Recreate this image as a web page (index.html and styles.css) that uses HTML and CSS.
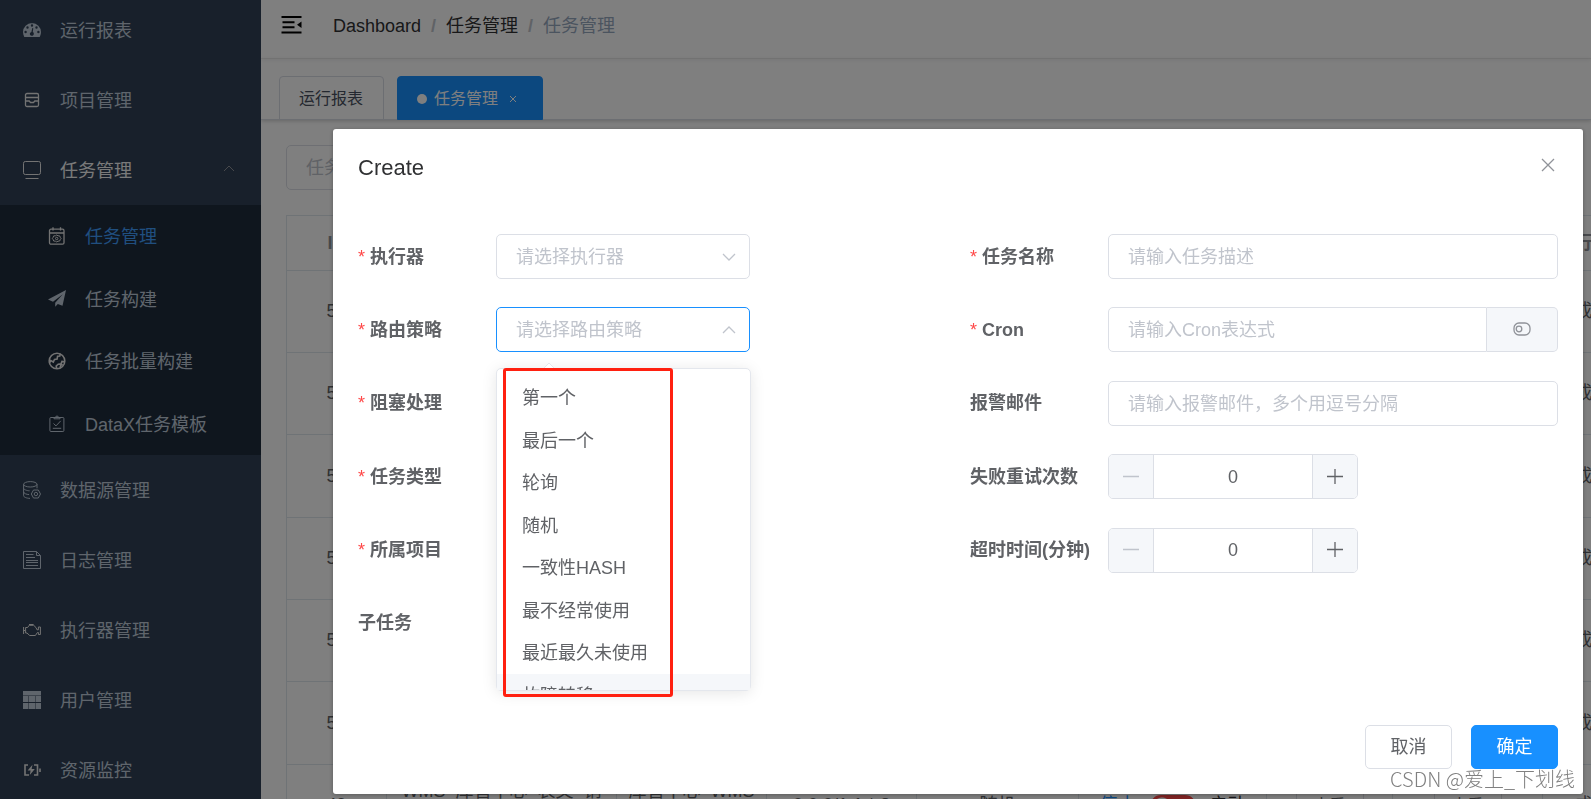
FILE: index.html
```html
<!DOCTYPE html>
<html lang="zh-CN">
<head>
<meta charset="utf-8">
<title>任务管理</title>
<link rel="stylesheet" href="styles.css">
</head>
<body>
<div class="app">
  <nav class="sidebar">
    <ul class="menu">
      <li><a class="menu-item" href="#">
        <svg class="icon" viewBox="0 0 18 18"><path fill="currentColor" fill-rule="evenodd" d="M9 2a9 9 0 0 0-9 9c0 1.800.5 3.400 1.300 5h15.400c.800-1.600 1.300-3.200 1.300-5a9 9 0 0 0-9-9zM9 3.300a1.200 1.200 0 1 1 0 2.400 1.200 1.200 0 0 1 0-2.400zM4.500 5.300a1.200 1.200 0 1 1 0 2.400 1.200 1.200 0 0 1 0-2.400zM13.500 5.300a1.200 1.200 0 1 1 0 2.400 1.200 1.200 0 0 1 0-2.400zM2.600 9.800a1.200 1.200 0 1 1 0 2.400 1.200 1.200 0 0 1 0-2.400zM15.400 9.800a1.200 1.200 0 1 1 0 2.400 1.200 1.200 0 0 1 0-2.400zM9.300 7l1 .2-.5 3.900a2 2 0 1 1-1.400-.2z"/></svg>
        <span>运行报表</span></a></li>
      <li><a class="menu-item" href="#">
        <svg class="icon bright" viewBox="0 0 18 18"><g class="line mid"><rect x="2.500" y="2.500" width="13" height="13" rx="1.500"/><path d="M2.500 6.500h13M2.500 10h3.700l1.300 1.500h3L11.800 10h3.700"/></g></svg>
        <span>项目管理</span></a></li>
      <li><a class="menu-item open" href="#">
        <svg class="icon bright" viewBox="0 0 18 18"><g class="line"><rect x=".5" y=".5" width="17" height="13" rx="1.800"/><path d="M2.500 17.500h13"/></g></svg>
        <span>任务管理</span>
        <svg class="caret" viewBox="0 0 12 8"><path class="line" d="M1 6l5-5 5 5"/></svg></a>
        <ul class="submenu">
          <li><a class="menu-item active" href="#">
            <svg class="icon bright" viewBox="0 0 18 18"><g class="line mid"><rect x="1.500" y="2.200" width="14.500" height="15" rx="1.500"/><path d="M1.500 6h14.500M5 .3v3.200M12.500 .3v3.200"/></g><g class="line"><path d="M8.700 8l1.300.8 1.700.1.600 1.500.8 1-.8 1.100-.6 1.500-1.700.2-1.300.7-1.300-.7-1.700-.2-.6-1.500-.8-1.100.8-1 .6-1.500 1.700-.1z"/><circle cx="8.700" cy="11.500" r="1.200"/></g></svg>
            <span>任务管理</span></a></li>
          <li><a class="menu-item" href="#">
            <svg class="icon" viewBox="0 0 18 18"><path fill="currentColor" d="M18 0L0 9.500l5 2.200L14.800 4.200l-7.600 8.500v4.100l2.600-2.800 4.700 1.800z"/></svg>
            <span>任务构建</span></a></li>
          <li><a class="menu-item" href="#">
            <svg class="icon bright" viewBox="0 0 18 18"><g class="line thick"><circle cx="9" cy="9" r="7.800"/><path d="M1.300 11l1.500-2.500 2.500 1.500 1.200-2.600 2.600-.4.500-2.800 2.200-.2.500-2.300M8.700 16.500l-.5-2.500 2-1.800 2.800-.3 1-2.400 2.800.4M12 15.800l.8-2.500 2-.8"/></g></svg>
            <span>任务批量构建</span></a></li>
          <li><a class="menu-item" href="#">
            <svg class="icon" viewBox="0 0 18 18"><g class="line"><rect x="1.900" y="2.500" width="14" height="14" rx="1"/><path d="M6 3.800V2.500h1.500l.6-1.300h1.800l.6 1.300H12v1.300zM5.500 8.500l2.500 2.400 4.700-5M4.800 13.300h8.400"/></g></svg>
            <span>DataX任务模板</span></a></li>
        </ul></li>
      <li><a class="menu-item" href="#">
        <svg class="icon" viewBox="0 0 18 18"><g class="line"><ellipse cx="7.300" cy="3.300" rx="6.700" ry="2.700"/><path d="M.6 3.300v11.400c0 1.400 3 2.600 6.400 2.700M14 3.300v4M.6 7.200c0 1.300 3 2.500 6 2.600M.6 11c0 1.300 3 2.500 5.500 2.600"/><path d="M10.500 9h4.800l2.200 4-2.200 4h-4.800l-2.200-4z"/><circle cx="12.900" cy="13" r="1.700"/></g></svg>
        <span>数据源管理</span></a></li>
      <li><a class="menu-item" href="#">
        <svg class="icon" viewBox="0 0 18 18"><g class="line"><path d="M.5.5h13l4 4v13H.5zM13.500.5v4h4M3 3.500h7.500M3 6.500h9M3 9.500h12M3 11.500h12M3 14.500h12"/></g></svg>
        <span>日志管理</span></a></li>
      <li><a class="menu-item" href="#">
        <svg class="icon bright" viewBox="0 0 18 18"><g class="line"><path d="M.6 6v7M.6 9.500h2V6.500h2l1.600-2.200h4.500l2.300 2.300 1 2.200h1.400V6h2v7.500h-2v-2h-1l-2 3H6.700L4 12H2.600V9.500M6 3.500h4.500"/></g></svg>
        <span>执行器管理</span></a></li>
      <li><a class="menu-item" href="#">
        <svg class="icon" viewBox="0 0 18 18"><path fill="currentColor" d="M0 0h18v4.500H0zM0 5h5.500v6H0zM6 5h6v6H6zM12.500 5H18v6h-5.500zM0 12h5.500v6H0zM6 12h6v6H6zM12.500 12H18v6h-5.500z"/></svg>
        <span>用户管理</span></a></li>
      <li><a class="menu-item" href="#">
        <svg class="icon bright" viewBox="0 0 18 18"><path class="line thick" d="M5 4H2v10h4M11 4h3.500v10H11M17 7.500v3.500"/><path fill="currentColor" d="M9.500 3.700L4.600 9.500h3L6.800 14l5-6H8.600z"/></svg>
        <span>资源监控</span></a></li>
    </ul>
  </nav>

  <main class="main">
    <header class="navbar">
      <button class="hamburger" type="button" aria-label="折叠菜单"><svg viewBox="0 0 20 18"><path fill="#000" d="M0 0h20v2H0zM1 5.300h12v2H1zM1 10.300h12v2H1zM0 15.500h20v2H0zM20 5.500v6.500l-4.500-3.200z"/></svg></button>
      <div class="breadcrumb"><a href="#">Dashboard</a><b>/</b><a href="#">任务管理</a><b>/</b><span>任务管理</span></div>
    </header>
    <div class="tags">
      <a class="tag" href="#">运行报表</a>
      <a class="tag current" href="#"><i class="dot"></i>任务管理<svg class="tag-close" viewBox="0 0 8 8"><path class="line" d="M1 1l6 6M7 1l-6 6"/></svg></a>
    </div>
    <section class="content">
      <input class="control filter" type="text" placeholder="任务名称" aria-label="任务名称">
      <table class="grid">
        <colgroup><col class="c100"><col class="c230"><col class="c150"><col class="c150"><col class="c162"><col class="c188"><col class="c126"><col class="c150"><col class="c100"></colgroup>
        <thead><tr><th>ID</th><th></th><th></th><th></th><th></th><th></th><th></th><th></th><th>执行状态</th></tr></thead>
        <tbody>
          <tr><td>55</td><td></td><td></td><td></td><td></td><td></td><td></td><td></td><td>成功</td></tr>
          <tr><td>54</td><td></td><td></td><td></td><td></td><td></td><td></td><td></td><td>成功</td></tr>
          <tr><td>53</td><td></td><td></td><td></td><td></td><td></td><td></td><td></td><td>成功</td></tr>
          <tr><td>52</td><td></td><td></td><td></td><td></td><td></td><td></td><td></td><td>成功</td></tr>
          <tr><td>51</td><td></td><td></td><td></td><td></td><td></td><td></td><td></td><td>成功</td></tr>
          <tr><td>50</td><td></td><td></td><td></td><td></td><td></td><td></td><td></td><td>成功</td></tr>
          <tr><td>49</td><td>WMS_库管中心_表文_销售</td><td>库管中心_WMS项目</td><td>0 0 0/1 1 * ?</td><td>随机</td>
            <td><div class="state"><span class="stop">停止</span><i class="switch"></i><span class="start">启动</span></div></td>
            <td><button class="mini" type="button">查看</button></td><td><button class="mini" type="button">查看</button></td><td>成功</td></tr>
        </tbody>
      </table>
    </section>
  </main>
</div>

<div class="overlay">
  <div class="dialog" role="dialog" aria-labelledby="dialog-title">
    <header class="dialog-head">
      <h1 id="dialog-title">Create</h1>
      <button class="close" type="button" aria-label="关闭"><svg viewBox="0 0 14 14"><path class="line mid" d="M1 1l12 12M13 1L1 13"/></svg></button>
    </header>
    <form class="form">
      <div class="fields">
        <div class="field"><label class="required" for="executor">执行器</label>
          <div class="select"><select class="control" id="executor"><option>请选择执行器</option></select><svg class="chevron" viewBox="0 0 14 8"><path class="line mid" d="M1 1l6 6 6-6"/></svg></div></div>
        <div class="field"><label class="required" for="route">路由策略</label>
          <div class="select"><select class="control focus" id="route"><option>请选择路由策略</option></select><svg class="chevron" viewBox="0 0 14 8"><path class="line mid" d="M1 7l6-6 6 6"/></svg>
            <div class="dropdown">
              <svg class="pointer" viewBox="0 0 14 8"><path d="M1 8l6-6 6 6" fill="#fff" stroke="#e4e7ed"/></svg>
              <div class="clip"><ul class="options" role="listbox">
                <li role="option">第一个</li><li role="option">最后一个</li><li role="option">轮询</li><li role="option">随机</li><li role="option">一致性HASH</li><li role="option">最不经常使用</li><li role="option">最近最久未使用</li><li role="option" class="hover">故障转移</li>
              </ul></div>
              <div class="marker"></div>
            </div></div></div>
        <div class="field"><label class="required" for="block">阻塞处理</label><div class="select"><select class="control" id="block"></select></div></div>
        <div class="field"><label class="required" for="type">任务类型</label><div class="select"><select class="control" id="type"></select></div></div>
        <div class="field"><label class="required" for="project">所属项目</label><div class="select"><select class="control" id="project"></select></div></div>
        <div class="field"><label for="child">子任务</label><div class="select"><select class="control" id="child"></select></div></div>
      </div>
      <div class="fields">
        <div class="field"><label class="required" for="name">任务名称</label><input class="control" id="name" type="text" placeholder="请输入任务描述"></div>
        <div class="field"><label class="required" for="cron">Cron</label>
          <div class="group"><input class="control" id="cron" type="text" placeholder="请输入Cron表达式"><button class="append" type="button" aria-label="生成表达式"><svg viewBox="0 0 18 14"><g class="line mid"><rect x="1" y="1" width="16" height="12" rx="5"/><circle cx="6" cy="7" r="2.800"/></g></svg></button></div></div>
        <div class="field"><label for="mail">报警邮件</label><input class="control" id="mail" type="text" placeholder="请输入报警邮件，多个用逗号分隔"></div>
        <div class="field"><label for="retry">失败重试次数</label>
          <div class="number"><button type="button" class="off" aria-label="减少"><svg viewBox="0 0 16 16"><path class="line mid" d="M0 7.500h16"/></svg></button><input id="retry" type="text" value="0"><button type="button" aria-label="增加"><svg viewBox="0 0 16 16"><path class="line mid" d="M0 7.500h16M8 0v15"/></svg></button></div></div>
        <div class="field"><label for="timeout">超时时间(分钟)</label>
          <div class="number"><button type="button" class="off" aria-label="减少"><svg viewBox="0 0 16 16"><path class="line mid" d="M0 7.500h16"/></svg></button><input id="timeout" type="text" value="0"><button type="button" aria-label="增加"><svg viewBox="0 0 16 16"><path class="line mid" d="M0 7.500h16M8 0v15"/></svg></button></div></div>
        <div class="field"></div>
      </div>
    </form>
    <footer class="actions">
      <button class="btn" type="button">取消</button>
      <button class="btn primary" type="button">确定</button>
    </footer>
  </div>
</div>
<div class="watermark">CSDN @爱上_下划线</div>
</body>
</html>
```
FILE: styles.css
```css
* { box-sizing: border-box; }
body {
  margin: 0;
  height: 100vh;
  overflow: hidden;
  background: #fff;
  color: #606266;
  font: 18px/24px "Liberation Sans", "Noto Sans CJK SC", sans-serif;
}
ul { list-style: none; margin: 0; padding: 0; }
a { color: inherit; text-decoration: none; }
button, input, select { font: inherit; color: inherit; margin: 0; }
button { cursor: pointer; }
svg { display: block; flex: none; }
.line { fill: none; stroke: currentColor; stroke-width: 1; }
.mid { stroke-width: 1.3; }
.thick { stroke-width: 1.6; }

.app { display: flex; height: 100vh; overflow: hidden; }

/* Sidebar */
.sidebar { flex: 0 0 261px; overflow: hidden; background: #304156; color: #bfcbd9; }
.menu { margin-top: -5px; }
.menu-item { display: flex; align-items: center; height: 70px; padding: 0 26px 0 23px; }
.menu-item span { padding: 2px 0 0 19px; flex: 1; }
.icon { width: 18px; height: 18px; }
.bright { color: #e6e6e6; }
.open { color: #f4f4f5; }
.caret { width: 12px; height: 8px; margin-bottom: 2px; color: #909399; }
.submenu { display: grid; grid-auto-rows: 1fr; height: 250px; background: #1f2d3d; }
.submenu .menu-item { height: 100%; padding-left: 48px; }
.active span { color: #409eff; }

/* Top bars */
.main { flex: 1; min-width: 0; overflow: hidden; }
.navbar { display: flex; align-items: center; height: 59px; padding: 0 20px 8px; border-bottom: 1px solid #f0f0f0; box-shadow: 0 1px 4px rgba(0, 21, 41, .08); }
.hamburger { padding: 0; border: 0; background: none; }
.hamburger svg { width: 21px; height: 18px; }
.breadcrumb { display: flex; gap: 10px; margin-left: 31px; padding-top: 2px; color: #303133; }
.breadcrumb b { color: #c0c4cc; }
.breadcrumb span { color: #97a8be; }
.tags { display: flex; align-items: flex-end; gap: 13px; height: 61px; padding-left: 18px; border-bottom: 1px solid #d8dce5; box-shadow: 0 1px 4px rgba(0, 0, 0, .2); font-size: 16px; }
.tag { display: flex; align-items: center; height: 44px; margin-bottom: -1px; padding: 2px 20px 0 19px; border: 1px solid #d8dce5; border-radius: 4px 4px 0 0; color: #495060; }
.current { background: #1890ff; border-color: #1890ff; color: #fff; }
.dot { width: 10px; height: 10px; margin-right: 7px; border-radius: 50%; background: #fff; }
.tag-close { width: 8px; height: 8px; margin: 0 5px 0 11px; }

/* Page content */
.content { padding: 25px; }
.filter { width: 250px; }
.grid { width: 1356px; margin-top: 25px; table-layout: fixed; border-collapse: collapse; text-align: center; line-height: 29px; }
.grid th, .grid td { padding: 0 10px; border: 1px solid #dfe6ec; overflow: hidden; }
.grid th { height: 55px; color: #909399; white-space: nowrap; }
.grid td { height: 82px; }
.grid tr:nth-child(3n) td { height: 83px; }
.c100 { width: 100px; }
.c126 { width: 126px; }
.c150 { width: 150px; }
.c162 { width: 162px; }
.c188 { width: 188px; }
.c230 { width: 230px; }
.state { display: flex; align-items: center; justify-content: center; gap: 14px; }
.stop { color: #1890ff; }
.start { color: #303133; }
.switch { width: 46px; height: 22px; border: 2px solid #ff4949; border-radius: 11px; background: radial-gradient(circle at 10px 9px, #fff 8px, #ff4949 9px); }
.mini { width: 68px; height: 42px; padding: 0; border: 1px solid #dcdfe6; border-radius: 4px; background: #fff; font-size: 16px; }

/* Form controls */
.control { width: 100%; height: 45px; padding: 0 19px; border: 1px solid #dcdfe6; border-radius: 5px; background: #fff; outline: 0; }
input.control { padding-top: 2px; }
.control::placeholder { color: #c0c4cc; opacity: 1; }
select.control { appearance: none; color: #c0c4cc; }
.focus { border-color: #1890ff; }

/* Dialog */
.overlay { position: fixed; inset: 0; display: flex; align-items: flex-start; padding: 129px 8px 0 333px; background: rgba(0, 0, 0, .5); }
.dialog { flex: 1; min-width: 0; border-radius: 3px; background: #fff; box-shadow: 0 1px 4px rgba(0, 0, 0, .3); }
.dialog-head { display: flex; align-items: center; justify-content: space-between; height: 77px; padding: 0 28px 0 25px; }
.dialog-head h1 { margin: 0; color: #303133; font-size: 22px; font-weight: 400; }
.close { padding: 0; border: 0; background: none; color: #909399; }
.close svg { width: 14px; height: 14px; margin-bottom: 5px; }
.form { display: grid; grid-template-columns: 1fr 1fr; column-gap: 24px; padding: 28px 25px 0; }
.fields { display: grid; align-content: space-between; grid-auto-rows: 45px; height: 412px; }
.field { display: flex; align-items: center; }
.field label { flex: 0 0 138px; font-weight: 700; white-space: nowrap; }
.required::before { content: "*"; margin-right: 5px; color: #ff4949; font-weight: 400; }
.select { position: relative; width: 254px; }
.chevron { position: absolute; right: 14px; top: 19px; width: 14px; height: 8px; color: #c0c4cc; pointer-events: none; }
.group { display: flex; flex: 1; }
.group .control { border-radius: 5px 0 0 5px; }
.append { display: grid; place-items: center; flex: 0 0 71px; padding: 0; border: 1px solid #dcdfe6; border-left: 0; border-radius: 0 5px 5px 0; background: #f5f7fa; color: #909399; }
.append svg { width: 18px; height: 14px; margin-bottom: 2px; }
.number { display: flex; width: 250px; height: 45px; border: 1px solid #dcdfe6; border-radius: 5px; overflow: hidden; }
.number button { display: grid; place-items: center; flex: 0 0 44px; padding: 0; border: 0; background: #f5f7fa; }
.number svg { width: 16px; height: 16px; }
.number input { flex: 1; min-width: 0; padding: 0; border: solid #dcdfe6; border-width: 0 1px; text-align: center; outline: 0; }
.number .off { color: #c0c4cc; }

.dropdown { position: absolute; z-index: 2; top: 61px; left: 0; width: 255px; height: 323px; border: 1px solid #e4e7ed; border-radius: 5px; background: #fff; box-shadow: 0 2px 15px rgba(0, 0, 0, .1); }
.pointer { position: absolute; top: -8px; left: 45px; width: 14px; height: 8px; }
.clip { height: 321px; padding-top: 7px; overflow: hidden; }
.options { display: grid; grid-auto-rows: 1fr; height: 340px; }
.options li { display: flex; align-items: center; padding: 1px 25px 0; }
.options .hover { background: #f5f7fa; }
.marker { position: absolute; top: -1px; left: 6px; width: 170px; height: 329px; border: 3px solid #ff2010; border-radius: 3px; }

.actions { display: flex; justify-content: flex-end; gap: 19px; padding: 79px 25px 25px; }
.btn { width: 87px; height: 44px; padding: 0; border: 1px solid #dcdfe6; border-radius: 5px; background: #fff; }
.primary { border-color: #1890ff; background: #1890ff; color: #fff; }

.watermark { position: fixed; right: 16px; bottom: 8px; color: #808080; font-family: "Noto Sans CJK SC", sans-serif; font-size: 20px; font-weight: 300; text-shadow: 1px 1px 0 #fff; }
```
